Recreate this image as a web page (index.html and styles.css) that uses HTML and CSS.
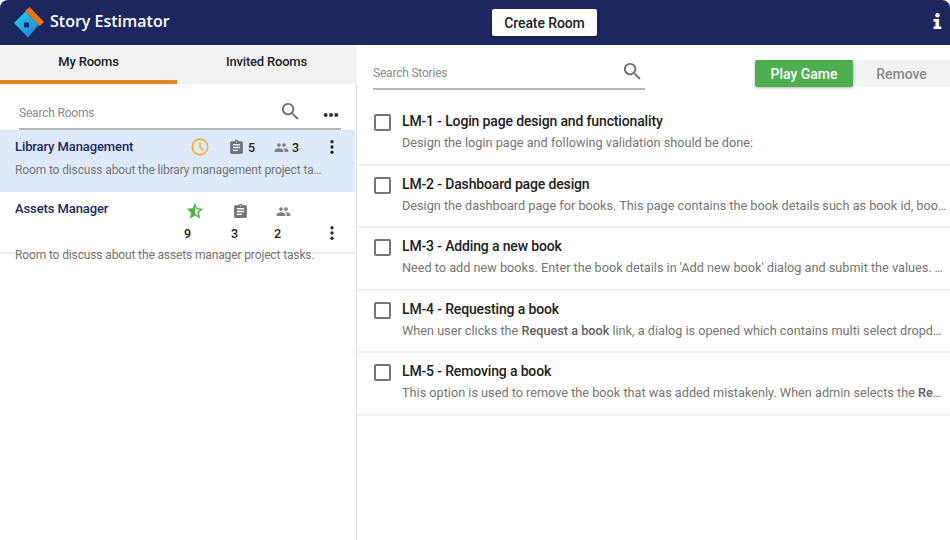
FILE: index.html
```html
<!DOCTYPE html>
<html lang="en">
<head>
  <meta charset="UTF-8">
  <title>Story Estimator</title>
  <link rel="stylesheet" href="styles.css">
</head>
<body>

<svg class="sprite" width="0" height="0">
  <defs>
    <linearGradient id="logoBlue" x1="0" y1="0" x2="0.7" y2="1">
      <stop offset="0" stop-color="#1fd6f2"/>
      <stop offset="1" stop-color="#1f86d8"/>
    </linearGradient>
  </defs>
  <symbol id="i-search" viewBox="0 0 24 24"><path d="M15.5 14h-.79l-.28-.27C15.41 12.59 16 11.11 16 9.5 16 5.91 13.09 3 9.5 3S3 5.91 3 9.5 5.91 16 9.5 16c1.61 0 3.09-.59 4.23-1.57l.27.28v.79l5 4.99L20.49 19l-4.99-5zm-6 0C7.01 14 5 11.99 5 9.5S7.01 5 9.5 5 14 7.01 14 9.5 11.99 14 9.5 14z"/></symbol>
  <symbol id="i-task" viewBox="0 0 24 24"><path d="M19 3h-4.18C14.4 1.84 13.3 1 12 1c-1.3 0-2.4.84-2.82 2H5c-1.1 0-2 .9-2 2v14c0 1.1.9 2 2 2h14c1.1 0 2-.9 2-2V5c0-1.1-.9-2-2-2zm-7 0c.55 0 1 .45 1 1s-.45 1-1 1-1-.45-1-1 .45-1 1-1zm2 14H7v-2h7v2zm3-4H7v-2h10v2zm0-4H7V7h10v2z"/></symbol>
  <symbol id="i-people" viewBox="0 0 24 24"><path d="M16 11c1.66 0 2.99-1.34 2.99-3S17.66 5 16 5c-1.66 0-3 1.34-3 3s1.34 3 3 3zm-8 0c1.66 0 2.99-1.34 2.99-3S9.66 5 8 5C6.34 5 5 6.34 5 8s1.34 3 3 3zm0 2c-2.33 0-7 1.17-7 3.5V19h14v-2.5c0-2.33-4.67-3.5-7-3.5zm8 0c-.29 0-.62.02-.97.05 1.16.84 1.97 1.97 1.97 3.45V19h6v-2.5c0-2.33-4.67-3.5-7-3.5z"/></symbol>
  <symbol id="i-kebab" viewBox="0 0 24 24"><circle cx="12" cy="5" r="2.2"/><circle cx="12" cy="12" r="2.2"/><circle cx="12" cy="19" r="2.2"/></symbol>
  <symbol id="i-dots" viewBox="0 0 24 24"><circle cx="4" cy="12" r="3"/><circle cx="12" cy="12" r="3"/><circle cx="20" cy="12" r="3"/></symbol>
  <symbol id="i-star" viewBox="0 0 24 24"><path d="M22 9.24l-7.19-.62L12 2 9.19 8.63 2 9.24l5.46 4.73L5.82 21 12 17.27 18.18 21l-1.63-7.03L22 9.24zM12 15.4V6.1l1.71 4.04 4.38.38-3.32 2.88 1 4.28L12 15.4z"/></symbol>
</svg>

<div class="app">
  <header class="topbar">
    <div class="brand">
      <svg class="logo" width="32" height="32" viewBox="0 0 32 32">
        <polygon points="1,16 12.5,4.5 25.5,18 15,30.5" fill="url(#logoBlue)"/>
        <polygon points="12,4 16.5,0 31,15 26.5,19" fill="#ee7410"/>
        <rect x="11" y="15.5" width="5" height="5" fill="#1c2760"/>
      </svg>
      <span class="brand-name">Story Estimator</span>
    </div>
    <button class="create-btn">Create Room</button>
    <svg class="info" width="9" height="16" viewBox="0 0 9 16" fill="#fff">
      <circle cx="4.5" cy="2.2" r="2.2"/>
      <path d="M0.5 6h5.6v7.6h2.2V16H0.5v-2.4h2V8.4h-2z"/>
    </svg>
  </header>

  <div class="content">
    <aside class="rooms-pane">
      <div class="tabs">
        <div class="tab active">My Rooms</div>
        <div class="tab">Invited Rooms</div>
      </div>

      <div class="rooms-search">
        <div class="search-box">
          <span class="placeholder">Search Rooms</span>
          <svg class="ic-search"><use href="#i-search"/></svg>
          <svg class="ic-dots"><use href="#i-dots"/></svg>
        </div>
      </div>

      <div class="room selected">
        <div class="room-head">
          <div class="room-name">Library Management</div>
          <svg class="clock" width="18" height="18" viewBox="0 0 18 18">
            <circle cx="9" cy="9" r="7.8"/>
            <path d="M9 4.5V9.5L12.2 11.6"/>
          </svg>
          <div class="stat stat-tasks"><svg class="ic-task"><use href="#i-task"/></svg><b>5</b></div>
          <div class="stat stat-people"><svg class="ic-people"><use href="#i-people"/></svg><b>3</b></div>
          <svg class="ic-kebab"><use href="#i-kebab"/></svg>
        </div>
        <p class="room-desc">Room to discuss about the library management project tasks.</p>
      </div>

      <div class="room wrapped">
        <div class="room-head">
          <div class="room-name">Assets Manager</div>
          <div class="stat-col col-star"><span class="icon-box"><svg class="ic-star"><use href="#i-star"/></svg></span><b>9</b></div>
          <div class="stat-col col-tasks"><span class="icon-box"><svg class="ic-task"><use href="#i-task"/></svg></span><b>3</b></div>
          <div class="stat-col col-people"><span class="icon-box"><svg class="ic-people"><use href="#i-people"/></svg></span><b>2</b></div>
          <svg class="ic-kebab low"><use href="#i-kebab"/></svg>
        </div>
        <p class="room-desc">Room to discuss about the assets manager project tasks.</p>
      </div>
    </aside>

    <main class="stories-pane">
      <div class="stories-toolbar">
        <div class="search-box stories-search">
          <span class="placeholder">Search Stories</span>
          <svg class="ic-search"><use href="#i-search"/></svg>
        </div>
        <div class="actions">
          <button class="play-btn">Play Game</button>
          <button class="remove-btn">Remove</button>
        </div>
      </div>

      <div class="story">
        <span class="check"></span>
        <div class="story-body">
          <div class="story-title">LM-1 - Login page design and functionality</div>
          <div class="story-desc">Design the login page and following validation should be done:</div>
        </div>
      </div>
      <div class="story">
        <span class="check"></span>
        <div class="story-body">
          <div class="story-title">LM-2 - Dashboard page design</div>
          <div class="story-desc">Design the dashboard page for books. This page contains the book details such as book id, book name and author.</div>
        </div>
      </div>
      <div class="story">
        <span class="check"></span>
        <div class="story-body">
          <div class="story-title">LM-3 - Adding a new book</div>
          <div class="story-desc">Need to add new books. Enter the book details in 'Add new book' dialog and submit the values. The book is then added.</div>
        </div>
      </div>
      <div class="story">
        <span class="check"></span>
        <div class="story-body">
          <div class="story-title">LM-4 - Requesting a book</div>
          <div class="story-desc">When user clicks the <strong>Request a book</strong> link, a dialog is opened which contains multi select dropdown list.</div>
        </div>
      </div>
      <div class="story">
        <span class="check"></span>
        <div class="story-body">
          <div class="story-title">LM-5 - Removing a book</div>
          <div class="story-desc">This option is used to remove the book that was added mistakenly. When admin selects the <strong>Remove</strong> option.</div>
        </div>
      </div>
    </main>
  </div>
</div>

</body>
</html>
```

FILE: styles.css
```css
* {
  box-sizing: border-box;
}
body {
  margin: 0;
  background: #fff;
  font-family: Roboto, Arial, sans-serif;
}
button {
  font-family: inherit;
  border: none;
  cursor: pointer;
}
.sprite {
  display: block;
  height: 0;
}
.app {
  width: 950px;
  height: 540px;
  display: flex;
  flex-direction: column;
  overflow: hidden;
}

/* top bar */
.topbar {
  height: 45px;
  flex: none;
  background: #1c2760;
  border-radius: 8px 8px 0 0;
  display: flex;
  align-items: center;
  padding: 0 8px 0 13px;
}
.brand {
  width: 479px;
  display: flex;
  align-items: center;
}
.logo {
  margin-top: 1px;
}
.brand-name {
  margin: -3px 0 0 5px;
  color: #fff;
  font-family: "Open Sans", Arial, sans-serif;
  font-size: 16px;
  font-weight: 600;
}
.create-btn {
  width: 105px;
  height: 27px;
  background: #fff;
  border-radius: 2px;
  color: #212121;
  font-size: 14px;
  letter-spacing: -0.1px;
  font-weight: 500;
  box-shadow: 0 1px 3px rgba(0,0,0,0.3);
}
.info {
  margin-left: auto;
  margin-top: -3px;
}

.content {
  flex: 1;
  display: flex;
  min-height: 0;
}

/* left pane */
.rooms-pane {
  width: 357px;
  flex: none;
  border-right: 1px solid #dedede;
}
.tabs {
  display: flex;
  height: 39px;
  background: #f4f3f4;
  margin-right: -1px;
}
.tab {
  width: 177px;
  height: 39px;
  padding-top: 9px;
  text-align: center;
  color: #212121;
  font-size: 13px;
  letter-spacing: -0.2px;
  line-height: 16px;
  font-weight: 500;
}
.tab + .tab {
  width: 179px;
}
.tab.active {
  border-bottom: 4px solid #e38724;
}
.rooms-search {
  height: 46px;
  padding: 15px 0 0 19px;
}
.search-box {
  height: 31px;
  width: 322px;
  border-bottom: 2px solid #b5b5b5;
  display: flex;
  align-items: center;
}
.placeholder {
  margin-top: -1px;
  color: #8c8c8c;
  font-size: 12px;
  line-height: 16px;
  letter-spacing: -0.2px;
}
.ic-search {
  width: 23px;
  height: 23px;
  fill: #6f6f6f;
  margin-top: -4px;
  margin-left: auto;
}
.ic-dots {
  width: 16px;
  height: 16px;
  fill: #333;
  margin: 3px 2px 0 21px;
}

/* rooms */
.room {
  height: 62px;
  padding: 8px 13px 0 15px;
  margin-right: 1px;
  border-bottom: 2px solid #efefef;
}
.room.selected {
  background: #dfe9fc;
  border-bottom: none;
}
.room-head {
  display: flex;
  align-items: flex-start;
}
.room-name {
  width: 176px;
  color: #1c2760;
  font-size: 13px;
  letter-spacing: -0.1px;
  font-weight: 500;
  line-height: 17px;
}
.clock {
  fill: none;
  stroke: #f7ab1b;
  stroke-width: 1.4;
  stroke-linecap: round;
}
.stat {
  display: flex;
  align-items: center;
  height: 18px;
  gap: 3px;
  color: #212121;
}
.stat b, .stat-col b {
  font-size: 12.5px;
  font-weight: 500;
}
.stat-tasks {
  margin-left: 19px;
}
.stat-people {
  margin-left: 19px;
}
.ic-task {
  width: 17px;
  height: 17px;
  fill: #757575;
}
.ic-people {
  width: 15px;
  height: 15px;
  fill: #808080;
}
.ic-kebab {
  width: 18px;
  height: 18px;
  fill: #2a2a2a;
  margin-left: auto;
  margin-right: 1px;
}
.ic-kebab.low {
  margin-top: 23px;
}
.stat-col {
  display: flex;
  flex-direction: column;
  color: #212121;
}
.icon-box {
  height: 20px;
  display: flex;
  align-items: center;
}
.stat-col b {
  line-height: 16px;
  margin-top: 5px;
}
.col-star {
  margin-left: -7px;
  width: 47px;
}
.col-tasks {
  width: 43px;
}
.col-people {
  width: 30px;
}
.col-star .ic-star, .col-tasks .ic-task {
  margin-left: 1px;
}
.col-people .ic-people {
  margin-left: 2px;
}
.ic-star {
  width: 20px;
  height: 20px;
  fill: #4caf50;
}
.wrapped .room-head {
  padding-top: 1px;
}
.wrapped .room-name {
  margin-top: -1px;
}
.room-desc {
  margin: 6px 0 0;
  color: #757575;
  font-size: 12px;
  letter-spacing: -0.13px;
  line-height: 16px;
  white-space: nowrap;
  overflow: hidden;
  text-overflow: ellipsis;
  width: 309px;
}
.wrapped .room-desc {
  margin-top: 5px;
}

/* right pane */
.stories-pane {
  flex: 1;
  min-width: 0;
}
.stories-toolbar {
  height: 58px;
  display: flex;
  align-items: flex-start;
  padding-left: 16px;
}
.stories-search {
  width: 272px;
  margin-top: 14px;
}
.stories-search .ic-search {
  margin-right: 1px;
}
.actions {
  display: flex;
  margin-left: auto;
  margin-top: 15px;
}
.play-btn, .remove-btn {
  width: 98px;
  height: 27px;
  font-size: 14px;
  font-weight: 500;
}
.play-btn {
  background: #4caf50;
  color: #fff;
  border-radius: 2px;
  box-shadow: 0 1px 3px rgba(0,0,0,0.3);
  position: relative;
}
.remove-btn {
  width: 97px;
  background: #f3f3f3;
  color: #8a8a8a;
}
.story {
  height: 62.5px;
  display: flex;
  padding: 9px 3px 0 16px;
  border-bottom: 2px solid #f2f2f2;
}
.check {
  width: 17px;
  height: 17px;
  flex: none;
  margin: 2px 0 0 1px;
  border: 2px solid #757575;
  border-radius: 2px;
}
.story-body {
  margin-left: 11px;
  min-width: 0;
  flex: 1;
}
.story-title {
  color: #212121;
  font-size: 14px;
  letter-spacing: -0.15px;
  font-weight: 500;
  line-height: 18px;
}
.story-desc {
  margin-top: 4px;
  color: #757575;
  font-size: 12.7px;
  line-height: 17px;
  white-space: nowrap;
  overflow: hidden;
  text-overflow: ellipsis;
}
.story-desc strong {
  font-weight: 500;
  color: #616161;
}
```
